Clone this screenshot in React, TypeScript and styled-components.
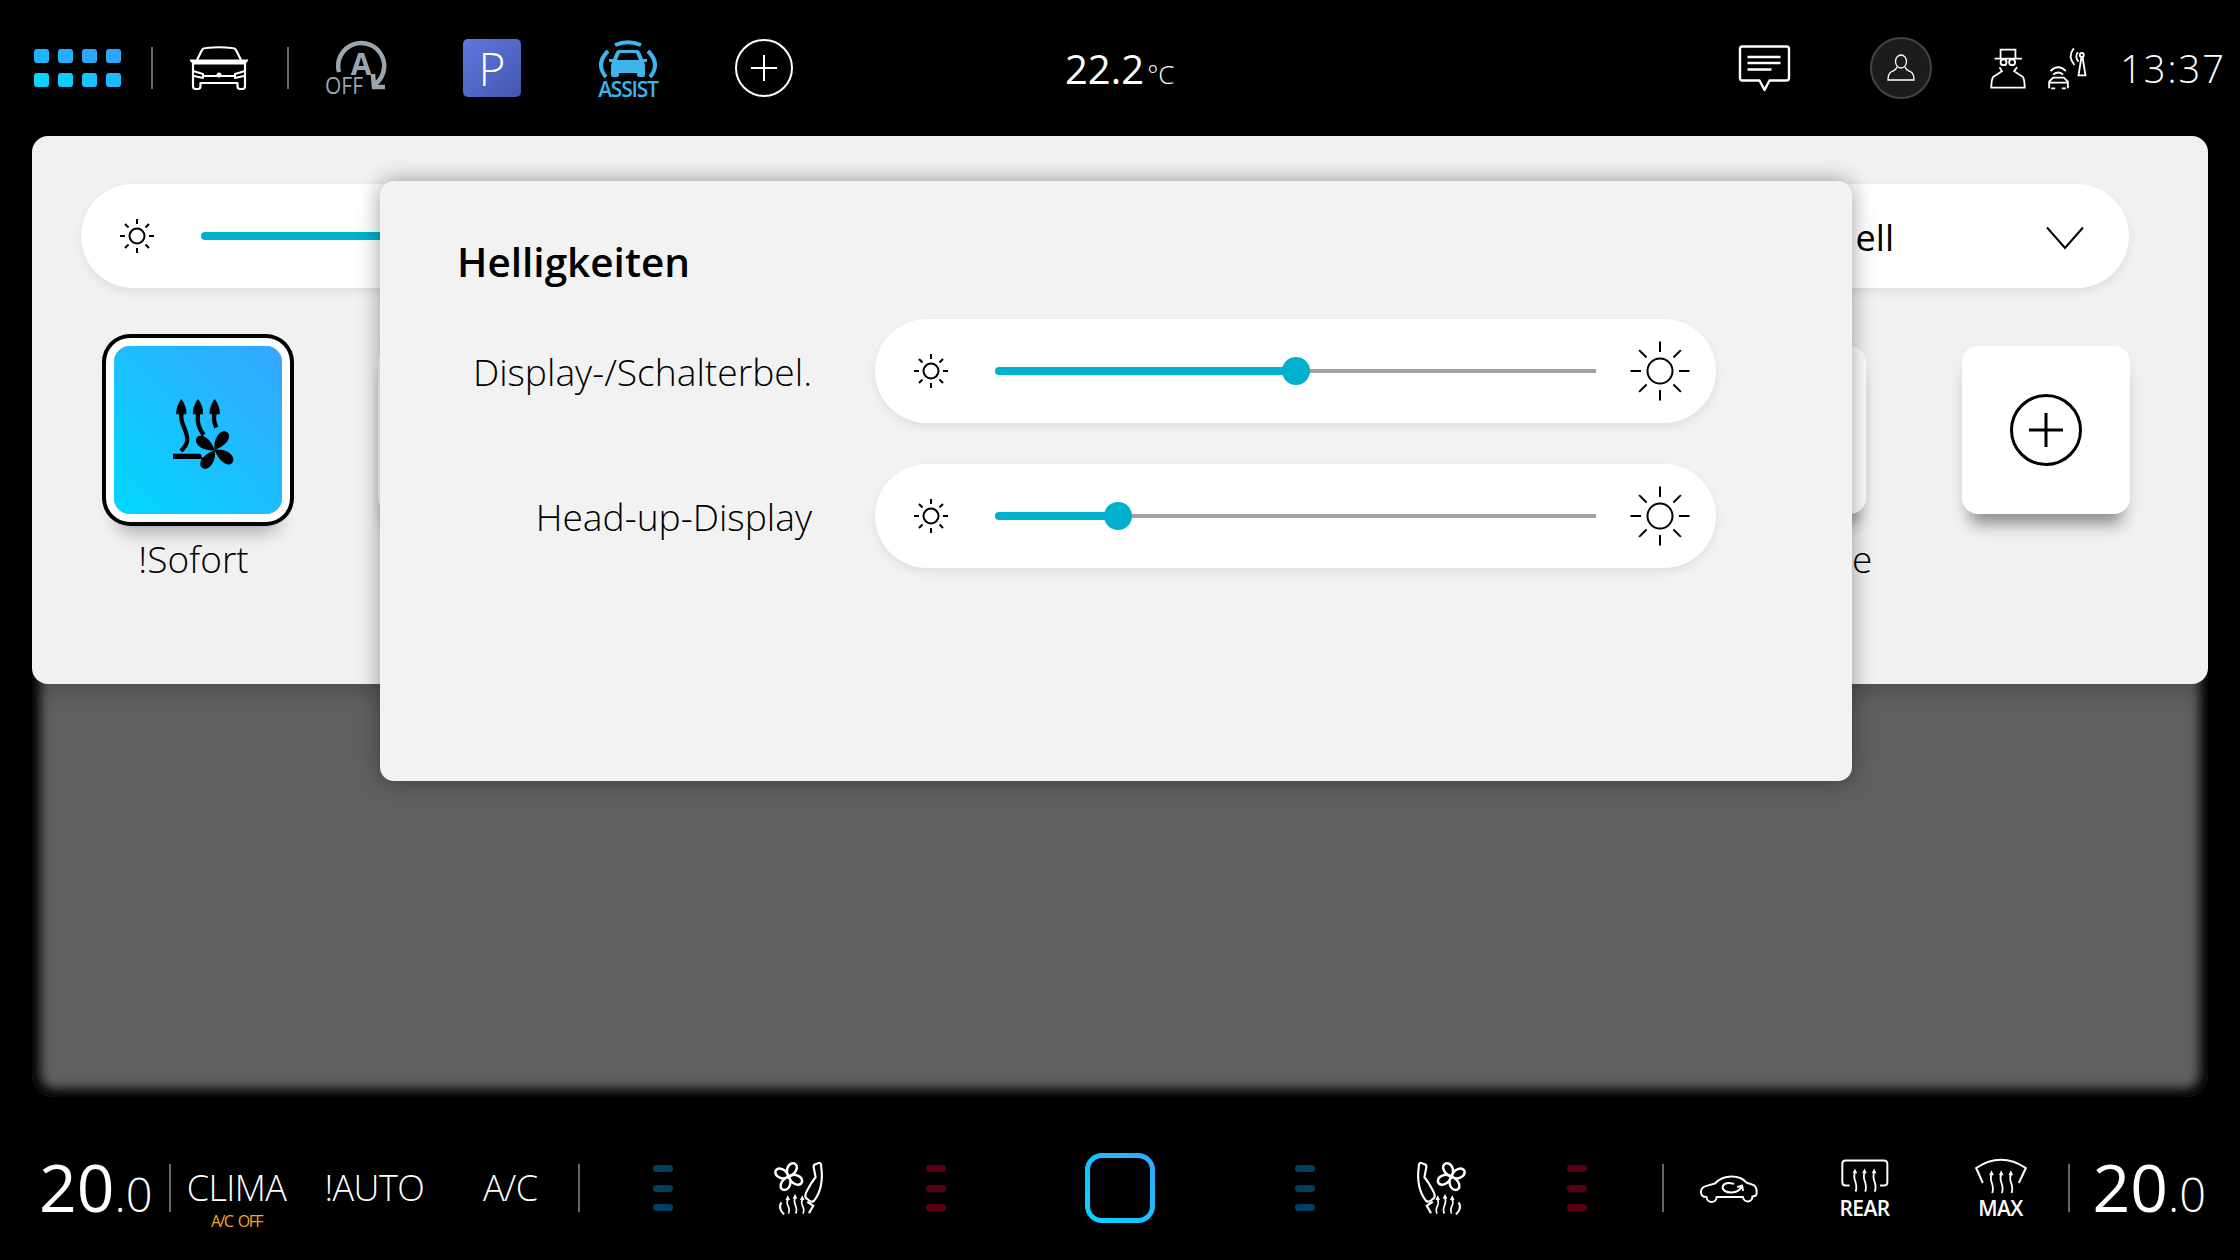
import styled, { createGlobalStyle } from "styled-components";

const GlobalStyle = createGlobalStyle`
  html, body {
    margin: 0;
    padding: 0;
    background: #000;
    font-family: "Open Sans", "Noto Sans", sans-serif;
  }
`;

const Screen = styled.div`
  position: relative;
  width: 2240px;
  height: 1260px;
  overflow: hidden;
  background: #000;
  color: #fff;
`;

/* ---------- top bar ---------- */

const TopBar = styled.header`
  height: 136px;
  display: flex;
  align-items: center;
  padding: 0 14px 0 34px;
  box-sizing: border-box;
`;

const Dots = styled.div`
  display: grid;
  grid-template-columns: repeat(4, 15px);
  grid-auto-rows: 14px;
  gap: 10px 9px;
`;

const Dot = styled.span<{ $color: string }>`
  border-radius: 3px;
  background: ${(p) => p.$color};
`;

const Divider = styled.span<{ $ml: number; $h?: number }>`
  flex: none;
  width: 2px;
  height: ${(p) => p.$h ?? 42}px;
  margin-left: ${(p) => p.$ml}px;
  background: #666;
`;

const Glyph = styled.svg<{ $ml?: number; $flip?: boolean }>`
  flex: none;
  display: block;
  overflow: visible;
  margin-left: ${(p) => p.$ml ?? 0}px;
  transform: ${(p) => (p.$flip ? "scaleX(-1)" : "none")};
`;

const ParkButton = styled.div`
  flex: none;
  width: 58px;
  height: 58px;
  margin-left: 77px;
  border-radius: 5px;
  background: linear-gradient(135deg, #6079de, #4355b0);
  display: flex;
  align-items: center;
  justify-content: center;
  font-size: 46px;
  font-weight: 300;
`;

const AssistBlock = styled.div`
  flex: none;
  width: 60px;
  margin-left: 77px;
  display: flex;
  flex-direction: column;
  align-items: center;
  color: #3cb5ea;
`;

const AssistLabel = styled.span`
  font-size: 21px;
  line-height: 18px;
  font-weight: 600;
  letter-spacing: -1.2px;
  white-space: nowrap;
`;

const OutsideTemp = styled.div`
  margin-left: 272px;
  padding-top: 2px;
  font-size: 40px;
  line-height: 1;
  font-weight: 400;
  white-space: nowrap;
`;

const TempUnit = styled.span`
  font-size: 26px;
  margin-left: 3px;
  font-weight: 300;
`;

const StatusGroup = styled.div`
  margin-left: auto;
  display: flex;
  align-items: center;
`;

const Avatar = styled.div`
  flex: none;
  width: 62px;
  height: 62px;
  margin-left: 79px;
  box-sizing: border-box;
  border: 2px solid #444;
  border-radius: 50%;
  background: #1c1c1c;
  display: flex;
  align-items: center;
  justify-content: center;
`;

const Clock = styled.div`
  margin-left: 32px;
  font-size: 38px;
  line-height: 1;
  font-weight: 300;
  letter-spacing: 2px;
`;

/* ---------- main area ---------- */

const Stage = styled.main`
  width: 2176px;
  height: 961px;
  margin-left: 32px;
  border-radius: 22px;
  background: #606060;
  box-shadow: inset 0 0 12px 8px #000;
`;

const Card = styled.section`
  height: 548px;
  box-sizing: border-box;
  padding: 48px 79px 0 49px;
  border-radius: 16px;
  background: #f1f1f1;
  color: #000;
  box-shadow: 0 4px 24px rgba(0, 0, 0, 0.25);
`;

const Pill = styled.div<{ $wide?: boolean }>`
  height: 104px;
  box-sizing: border-box;
  padding: 0 ${(p) => (p.$wide ? 45 : 26)}px 0 38px;
  display: flex;
  align-items: center;
  border-radius: 52px;
  background: #fff;
  box-shadow: 0 4px 10px rgba(0, 0, 0, 0.08);
`;

const Track = styled.div<{ $width: number }>`
  flex: none;
  width: ${(p) => p.$width}px;
  margin: 0 34px 0 46px;
  display: flex;
  align-items: center;
`;

const TrackFill = styled.div<{ $value: number }>`
  flex: none;
  width: ${(p) => p.$value}%;
  height: 8px;
  border-radius: 4px 0 0 4px;
  background: #00b0cd;
`;

const TrackRest = styled.div`
  flex: 1;
  height: 4px;
  background: #a3a3a3;
`;

const Thumb = styled.div`
  flex: none;
  position: relative;
  width: 28px;
  height: 28px;
  margin: 0 -14px;
  border-radius: 50%;
  background: #00b0cd;
`;

const ModeValue = styled.span`
  margin-left: auto;
  padding-top: 2px;
  font-size: 36px;
  color: #000;

  &::first-letter {
    letter-spacing: 4px;
  }
`;

const Chevron = styled.svg`
  flex: none;
  margin: 3px 0 0 152px;
`;

const TileRow = styled.div`
  margin: 58px 0 0 33px;
  display: flex;
  gap: 96px;
`;

const TileColumn = styled.div`
  flex: none;
  width: 168px;
  display: flex;
  flex-direction: column;
  align-items: center;
`;

const Tile = styled.div<{ $active?: boolean }>`
  width: 168px;
  height: 168px;
  border-radius: 16px;
  display: flex;
  align-items: center;
  justify-content: center;
  background: ${(p) =>
    p.$active ? "linear-gradient(45deg, #00d8ff, #36a6ff)" : "#fff"};
  box-shadow: ${(p) =>
    p.$active
      ? "0 0 0 8px #fff, 0 0 0 12px #000, 0 22px 18px -4px rgba(0, 0, 0, 0.3)"
      : "0 18px 16px -8px rgba(0, 0, 0, 0.4), 0 6px 30px rgba(0, 0, 0, 0.04)"};
`;

const TileLabel = styled.span<{ $shift?: number }>`
  margin-top: 21px;
  margin-right: ${(p) => p.$shift ?? 0}px;
  font-size: 37px;
  line-height: 48px;
  font-weight: 300;
  white-space: nowrap;
`;

/* ---------- dialog ---------- */

const Dialog = styled.section`
  position: absolute;
  top: 181px;
  left: 380px;
  width: 1472px;
  height: 600px;
  box-sizing: border-box;
  padding: 55px 136px 0 77px;
  border-radius: 14px;
  background: #f2f2f2;
  color: #000;
  box-shadow: 0 0 22px rgba(0, 0, 0, 0.38);
`;

const DialogTitle = styled.h2`
  margin: 0 0 31px;
  font-size: 40.5px;
  line-height: 52px;
  font-weight: 600;
`;

const SliderList = styled.div`
  display: flex;
  flex-direction: column;
  gap: 41px;
`;

const SliderRow = styled.div`
  display: grid;
  grid-template-columns: 355px 841px;
  column-gap: 63px;
  align-items: center;
`;

const SliderLabel = styled.span`
  text-align: right;
  padding-top: 1px;
  font-size: 37.2px;
  font-weight: 300;
  white-space: nowrap;
`;

/* ---------- climate bar ---------- */

const ClimateBar = styled.footer`
  height: 163px;
  box-sizing: border-box;
  padding: 19px 0 0 39px;
  display: flex;
  align-items: center;
`;

const SetTemp = styled.div<{ $ml?: number }>`
  flex: none;
  margin-left: ${(p) => p.$ml ?? 0}px;
  margin-bottom: 5px;
  font-size: 66px;
  line-height: 1;
  font-weight: 500;
  white-space: nowrap;
`;

const TempDecimal = styled.span`
  font-size: 47px;
  font-weight: 300;
`;

const ClimaColumn = styled.div`
  flex: none;
  width: 98px;
  margin-left: 17px;
  padding-top: 23px;
  display: flex;
  flex-direction: column;
  align-items: center;
`;

const BarLabel = styled.span<{ $ml?: number }>`
  flex: none;
  margin-left: ${(p) => p.$ml ?? 0}px;
  font-size: 36px;
  line-height: 36px;
  font-weight: 300;
  letter-spacing: -0.6px;
  white-space: nowrap;
`;

const ClimaSub = styled.span`
  margin-top: 8px;
  font-size: 16px;
  line-height: 15px;
  letter-spacing: -1.6px;
  word-spacing: 3px;
  color: #f5a623;
  white-space: nowrap;
`;

const Stepper = styled.div<{ $ml: number }>`
  flex: none;
  margin-left: ${(p) => p.$ml}px;
  display: flex;
  flex-direction: column;
  gap: 12.5px;
`;

const StepDash = styled.span<{ $hot?: boolean }>`
  width: 20px;
  height: 7px;
  border-radius: 4px;
  background: ${(p) => (p.$hot ? "#5a0010" : "#013f61")};
`;

const SyncFrame = styled.div`
  flex: none;
  width: 70px;
  height: 70px;
  margin-left: 139px;
  box-sizing: border-box;
  border: 5px solid transparent;
  border-radius: 17px;
  background: linear-gradient(#000, #000) padding-box,
    linear-gradient(45deg, #00d8ff, #36a6ff) border-box;
`;

const DefrostButton = styled.div<{ $ml: number; $w: number }>`
  flex: none;
  width: ${(p) => p.$w}px;
  margin-left: ${(p) => p.$ml}px;
  display: flex;
  flex-direction: column;
  align-items: center;
  gap: 4px;
`;

const DefrostLabel = styled.span`
  font-size: 21px;
  line-height: 20px;
  font-weight: 600;
  letter-spacing: -0.6px;
`;

const IconNudge = styled.div`
  margin: 7px 0 0 10px;
`;

/* ---------- drawings ---------- */

const Sun = ({ size }: { size: "small" | "big" }) => {
  const big = size === "big";
  const box = big ? 60 : 36;
  const c = box / 2;
  const r = big ? 12.5 : 7.5;
  const rays = [0, 45, 90, 135, 180, 225, 270, 315];
  return (
    <Glyph width={box} height={box} viewBox={`0 0 ${box} ${box}`}>
      <circle cx={c} cy={c} r={r} fill="none" stroke="#000" strokeWidth={2} />
      {rays.map((a) => (
        <line
          key={a}
          x1={c}
          y1={big ? c - 19 : c - 12}
          x2={c}
          y2={big ? 0.5 : 1}
          stroke="#000"
          strokeWidth={2}
          transform={`rotate(${a} ${c} ${c})`}
        />
      ))}
    </Glyph>
  );
};

const Slider = ({ value }: { value: number }) => (
  <Pill>
    <Sun size="small" />
    <Track $width={601}>
      <TrackFill $value={value} />
      <Thumb />
      <TrackRest />
    </Track>
    <Sun size="big" />
  </Pill>
);

const PlusCircle = ({ size, color, sw }: { size: number; color: string; sw: number }) => (
  <Glyph width={size} height={size} viewBox="0 0 72 72" fill="none" stroke={color} strokeWidth={sw}>
    <circle cx="36" cy="36" r={36 - sw / 2} />
    <path d="M19 36H53M36 19V53" />
  </Glyph>
);

const CarFront = () => (
  <Glyph $ml={36} width="60" height="44" viewBox="0 0 60 44" fill="none" stroke="#fff" strokeWidth="2.2" strokeLinejoin="round">
    <path d="M8 14 L13 4 Q14 2 17 2 Q30 0.5 43 2 Q46 2 47 4 L52 14" />
    <path d="M1 14 H59 L56 18 H4 Z" fill="#fff" strokeWidth="1" />
    <path d="M4 18 V40 Q4 43 6.5 43 H9 Q11.5 43 11.5 40 V37 H48.5 V40 Q48.5 43 51 43 H53.5 Q56 43 56 40 V18" />
    <path d="M4 25 L14 28 V32 L5 30 M56 25 L46 28 V32 L55 30 M14 30 H46" strokeWidth="2" />
    <circle cx="30" cy="29" r="2.5" fill="#fff" stroke="none" />
  </Glyph>
);

const AutoHoldOff = () => (
  <Glyph $ml={37} width="60" height="53" viewBox="0 0 60 53" fill="none" stroke="#9aa5ad">
    <path d="M13 30 A23 23 0 1 1 46.5 44" strokeWidth="4.5" />
    <path d="M47 32 L48 45 H59" strokeWidth="4.5" />
    <text x="35" y="33" textAnchor="middle" fontFamily="Open Sans" fontSize="30" fontWeight="700" fill="#9aa5ad" stroke="none">
      A
    </text>
    <text x="-1" y="51.5" textLength="38" lengthAdjust="spacingAndGlyphs" fontFamily="Open Sans" fontSize="23" fontWeight="500" fill="#9aa5ad" stroke="none">
      OFF
    </text>
  </Glyph>
);

const AssistCar = () => (
  <Glyph width="60" height="41" viewBox="0 0 60 41">
    <g fill="none" stroke="#3cb5ea" strokeWidth="4">
      <path d="M17 6 Q30 0.5 43 6" />
      <path d="M10 12 Q-3 25 8 38 M50 12 Q63 25 52 38" />
    </g>
    <path
      fillRule="evenodd"
      fill="#3cb5ea"
      d="M21 11 H39 Q41 11 42 13 L45 20 H49 V23 H46 Q47 25 47 27 V36 Q47 38 45 38 H41 Q39 38 39 36 V34 H21 V36 Q21 38 19 38 H15 Q13 38 13 36 V27 Q13 25 14 23 H11 V20 H15 L18 13 Q19 11 21 11 Z M22 14 L19 21 H41 L38 14 Z"
    />
  </Glyph>
);

const Message = () => (
  <Glyph width="53" height="46" viewBox="0 0 52 46" fill="none" stroke="#fff" strokeWidth="2.4">
    <path d="M4 1.5 H48 Q50.5 1.5 50.5 4 V33 Q50.5 35.5 48 35.5 H31 L26 45 L21 35.5 H4 Q1.5 35.5 1.5 33 V4 Q1.5 1.5 4 1.5 Z" strokeLinejoin="round" />
    <path d="M9 12 H42 M9 18 H42 M9 24.5 H33" strokeWidth="2.4" />
  </Glyph>
);

const Person = () => (
  <Glyph width="30" height="28" viewBox="0 0 30 28" fill="none" stroke="#fff" strokeWidth="1.3">
    <ellipse cx="15" cy="7.5" rx="5.5" ry="6.5" />
    <path d="M11 13 Q10 16 5 18 Q2 20 2 26 H28 Q28 20 25 18 Q20 16 19 13" />
  </Glyph>
);

const Incognito = () => (
  <Glyph $ml={57} width="38" height="43" viewBox="80 50 115 128" fill="none" stroke="#fff" strokeWidth="5.5">
    <path d="M115 83 V57 H160 V83 M97 84 H180" />
    <circle cx="124" cy="95" r="9" />
    <circle cx="150" cy="95" r="9" />
    <path d="M112 110 L119 122 L92 140 Q87 150 87 172 H188 Q188 150 183 140 L156 122 L165 110" />
  </Glyph>
);

const CarSignal = () => (
  <Glyph $ml={19} width="42" height="45" viewBox="255 45 125 135" fill="none" stroke="#fff" strokeWidth="5.5">
    <path d="M268 120 Q291 98 314 120 M276 131 Q291 118 306 131" />
    <path d="M264 172 V152 L276 140 H308 L320 152 V172 M264 155 H320 M270 172 H282 M302 172 H314" />
    <path d="M352 133 H373 L364 78 H361 Z" />
    <circle cx="362" cy="72" r="6" />
    <path d="M338 52 Q318 76 340 102 M350 64 Q340 78 352 92" />
  </Glyph>
);

/* one heat arrow going up: head at (x, y), wavy tail below */
const HeatArrow = ({ x, y, len, sw }: { x: number; y: number; len: number; sw: number }) => (
  <>
    <path d={`M${x} ${y} L${x + 7} ${y + 15} H${x - 7} Z`} fill="#fff" stroke="none" />
    <path
      d={`M${x} ${y + 14} C${x - 9} ${y + 14 + len * 0.35} ${x + 12} ${y + 14 + len * 0.55} ${x + 2} ${y + 14 + len}`}
      strokeWidth={sw}
    />
  </>
);

const Blade = ({ a }: { a: number }) => (
  <path d="M0 0 C-16 -9 -17 -33 -2 -38 C14 -38 15 -14 0 0 Z" transform={`rotate(${a})`} />
);

const SeatFan = ({ ml, flip }: { ml: number; flip?: boolean }) => (
  <Glyph $ml={ml} $flip={flip} width="49" height="53" viewBox="0 0 147 160" fill="none" stroke="#fff" strokeWidth="6.5">
    <g transform="translate(44 44) scale(1.14)">
      {[25, 115, 205, 295].map((a) => (
        <Blade key={a} a={a} />
      ))}
    </g>
    <path d="M121 8 L134 3 Q142 1 142 13 C147 50 141 90 121 116 Q115 123 107 117 L96 109 Q91 101 100 85 Q112 62 125 46 L119 14 Z" />
    <HeatArrow x={41} y={100} len={42} sw={5} />
    <HeatArrow x={63} y={96} len={46} sw={5} />
    <HeatArrow x={85} y={100} len={42} sw={5} />
    <path d="M22 122 C13 135 20 150 30 158 M100 120 L118 132 L105 155" />
  </Glyph>
);

const Recirculate = () => (
  <Glyph $ml={36} width="58" height="27" viewBox="60 100 175 80" fill="none" stroke="#fff" strokeWidth="6" strokeLinejoin="round">
    <path d="M80 166 Q62 166 63 150 Q63 136 80 132 L105 125 Q125 104 155 104 Q185 104 200 122 L222 130 Q232 136 231 155 Q230 164 218 164 A14 14 0 0 1 190 166 H110 A14 14 0 0 1 80 166 Z" />
    <path d="M163 126 Q130 118 128 137 Q130 152 155 152 Q178 152 186 133 M172 136 L187 131 L190 147" />
  </Glyph>
);

const RearHeat = () => (
  <Glyph width="48" height="35" viewBox="484 62 145 105" fill="none" stroke="#fff" strokeWidth="6">
    <path d="M510 142 H498 Q488 142 488 132 V76 Q488 66 498 66 H612 Q624 66 624 76 V132 Q624 142 612 142 H602" />
    <HeatArrow x={526} y={90} len={56} sw={5.5} />
    <HeatArrow x={555} y={90} len={56} sw={5.5} />
    <HeatArrow x={584} y={90} len={56} sw={5.5} />
  </Glyph>
);

const MaxHeat = () => (
  <Glyph width="52" height="36" viewBox="885 55 155 108" fill="none" stroke="#fff" strokeWidth="6">
    <path d="M908 130 L888 85 Q962 36 1037 85 L1016 130" />
    <HeatArrow x={934} y={92} len={54} sw={5.5} />
    <HeatArrow x={963} y={92} len={54} sw={5.5} />
    <HeatArrow x={992} y={92} len={54} sw={5.5} />
  </Glyph>
);

const ImmediateIcon = () => (
  <Glyph width="60" height="70" viewBox="0 0 180 210">
    <g fill="#000">
      <path d="M25 0 C34 12 42 30 40 46 H10 C8 30 16 12 25 0 Z" />
      <path d="M75 0 C84 12 92 30 90 46 H60 C58 30 66 12 75 0 Z" />
      <path d="M125 0 C134 12 142 30 140 46 H110 C108 30 116 12 125 0 Z" />
      <path d="M0 164 H82 L90 180 H0 Z" />
    </g>
    <g fill="none" stroke="#000" strokeWidth="13">
      <path d="M25 44 C20 80 48 95 42 128 C40 140 32 148 24 156" />
      <path d="M75 44 C70 72 80 90 92 108" />
      <path d="M125 44 C120 58 124 72 130 86" />
    </g>
    <g fill="#000" transform="translate(125 153)">
      {[32, 122, 212, 302].map((a) => (
        <path key={a} d="M0 0 C-18 -18 -22 -54 -4 -64 C18 -72 30 -40 0 0 Z" transform={`rotate(${a})`} />
      ))}
    </g>
  </Glyph>
);

const dotColors = [
  "#1fb4ff", "#25aeff", "#2aa9ff", "#30a6ff",
  "#08d4ff", "#0ecbff", "#15c2ff", "#1cbaff",
];

const tiles = [
  { label: "!Sofort", active: true, shift: 9 },
  { label: "" },
  { label: "" },
  { label: "" },
  { label: "" },
  { label: "" },
  { label: "Fahrprofile" },
];

function App() {
  return (
    <Screen>
      <GlobalStyle />
      <TopBar>
        <Dots>
          {dotColors.map((c, i) => (
            <Dot key={i} $color={c} />
          ))}
        </Dots>
        <Divider $ml={30} />
        <CarFront />
        <Divider $ml={38} />
        <AutoHoldOff />
        <ParkButton>P</ParkButton>
        <AssistBlock>
          <AssistCar />
          <AssistLabel>ASSIST</AssistLabel>
        </AssistBlock>
        <Glyph $ml={77} width="58" height="58" viewBox="0 0 58 58" fill="none" stroke="#fff" strokeWidth="2">
          <circle cx="29" cy="29" r="28" />
          <path d="M16 29H42M29 16V42" />
        </Glyph>
        <OutsideTemp>
          22.2<TempUnit>°C</TempUnit>
        </OutsideTemp>
        <StatusGroup>
          <Message />
          <Avatar>
            <Person />
          </Avatar>
          <Incognito />
          <CarSignal />
          <Clock>13:37</Clock>
        </StatusGroup>
      </TopBar>

      <Stage>
        <Card>
          <Pill $wide>
            <Sun size="small" />
            <Track $width={1300}>
              <TrackFill $value={100} />
            </Track>
            <ModeValue>Hell</ModeValue>
            <Chevron width="38" height="24" viewBox="0 0 38 24" fill="none" stroke="#000" strokeWidth="2">
              <path d="M1 1.5 L19 22 L37 1.5" />
            </Chevron>
          </Pill>
          <TileRow>
            {tiles.map((t, i) => (
              <TileColumn key={i}>
                <Tile $active={t.active}>
                  {t.active && (
                    <IconNudge>
                      <ImmediateIcon />
                    </IconNudge>
                  )}
                </Tile>
                <TileLabel $shift={t.shift}>{t.label}</TileLabel>
              </TileColumn>
            ))}
            <TileColumn>
              <Tile>
                <PlusCircle size={72} color="#000" sw={3} />
              </Tile>
            </TileColumn>
          </TileRow>
        </Card>
      </Stage>

      <Dialog>
        <DialogTitle>Helligkeiten</DialogTitle>
        <SliderList>
          <SliderRow>
            <SliderLabel>Display-/Schalterbel.</SliderLabel>
            <Slider value={50} />
          </SliderRow>
          <SliderRow>
            <SliderLabel>Head-up-Display</SliderLabel>
            <Slider value={20.5} />
          </SliderRow>
        </SliderList>
      </Dialog>

      <ClimateBar>
        <SetTemp>
          20<TempDecimal>.0</TempDecimal>
        </SetTemp>
        <Divider $ml={16} $h={48} />
        <ClimaColumn>
          <BarLabel>CLIMA</BarLabel>
          <ClimaSub>A/C OFF</ClimaSub>
        </ClimaColumn>
        <BarLabel $ml={39}>!AUTO</BarLabel>
        <BarLabel $ml={59}>A/C</BarLabel>
        <Divider $ml={40} $h={48} />
        <Stepper $ml={73}>
          <StepDash />
          <StepDash />
          <StepDash />
        </Stepper>
        <SeatFan ml={101} />
        <Stepper $ml={103}>
          <StepDash $hot />
          <StepDash $hot />
          <StepDash $hot />
        </Stepper>
        <SyncFrame />
        <Stepper $ml={140}>
          <StepDash />
          <StepDash />
          <StepDash />
        </Stepper>
        <SeatFan ml={102} flip />
        <Stepper $ml={101}>
          <StepDash $hot />
          <StepDash $hot />
          <StepDash $hot />
        </Stepper>
        <Divider $ml={75} $h={48} />
        <Recirculate />
        <DefrostButton $ml={82} $w={50}>
          <RearHeat />
          <DefrostLabel>REAR</DefrostLabel>
        </DefrostButton>
        <DefrostButton $ml={85} $w={52}>
          <MaxHeat />
          <DefrostLabel>MAX</DefrostLabel>
        </DefrostButton>
        <Divider $ml={41} $h={48} />
        <SetTemp $ml={23}>
          20<TempDecimal>.0</TempDecimal>
        </SetTemp>
      </ClimateBar>
    </Screen>
  );
}

export default App;
